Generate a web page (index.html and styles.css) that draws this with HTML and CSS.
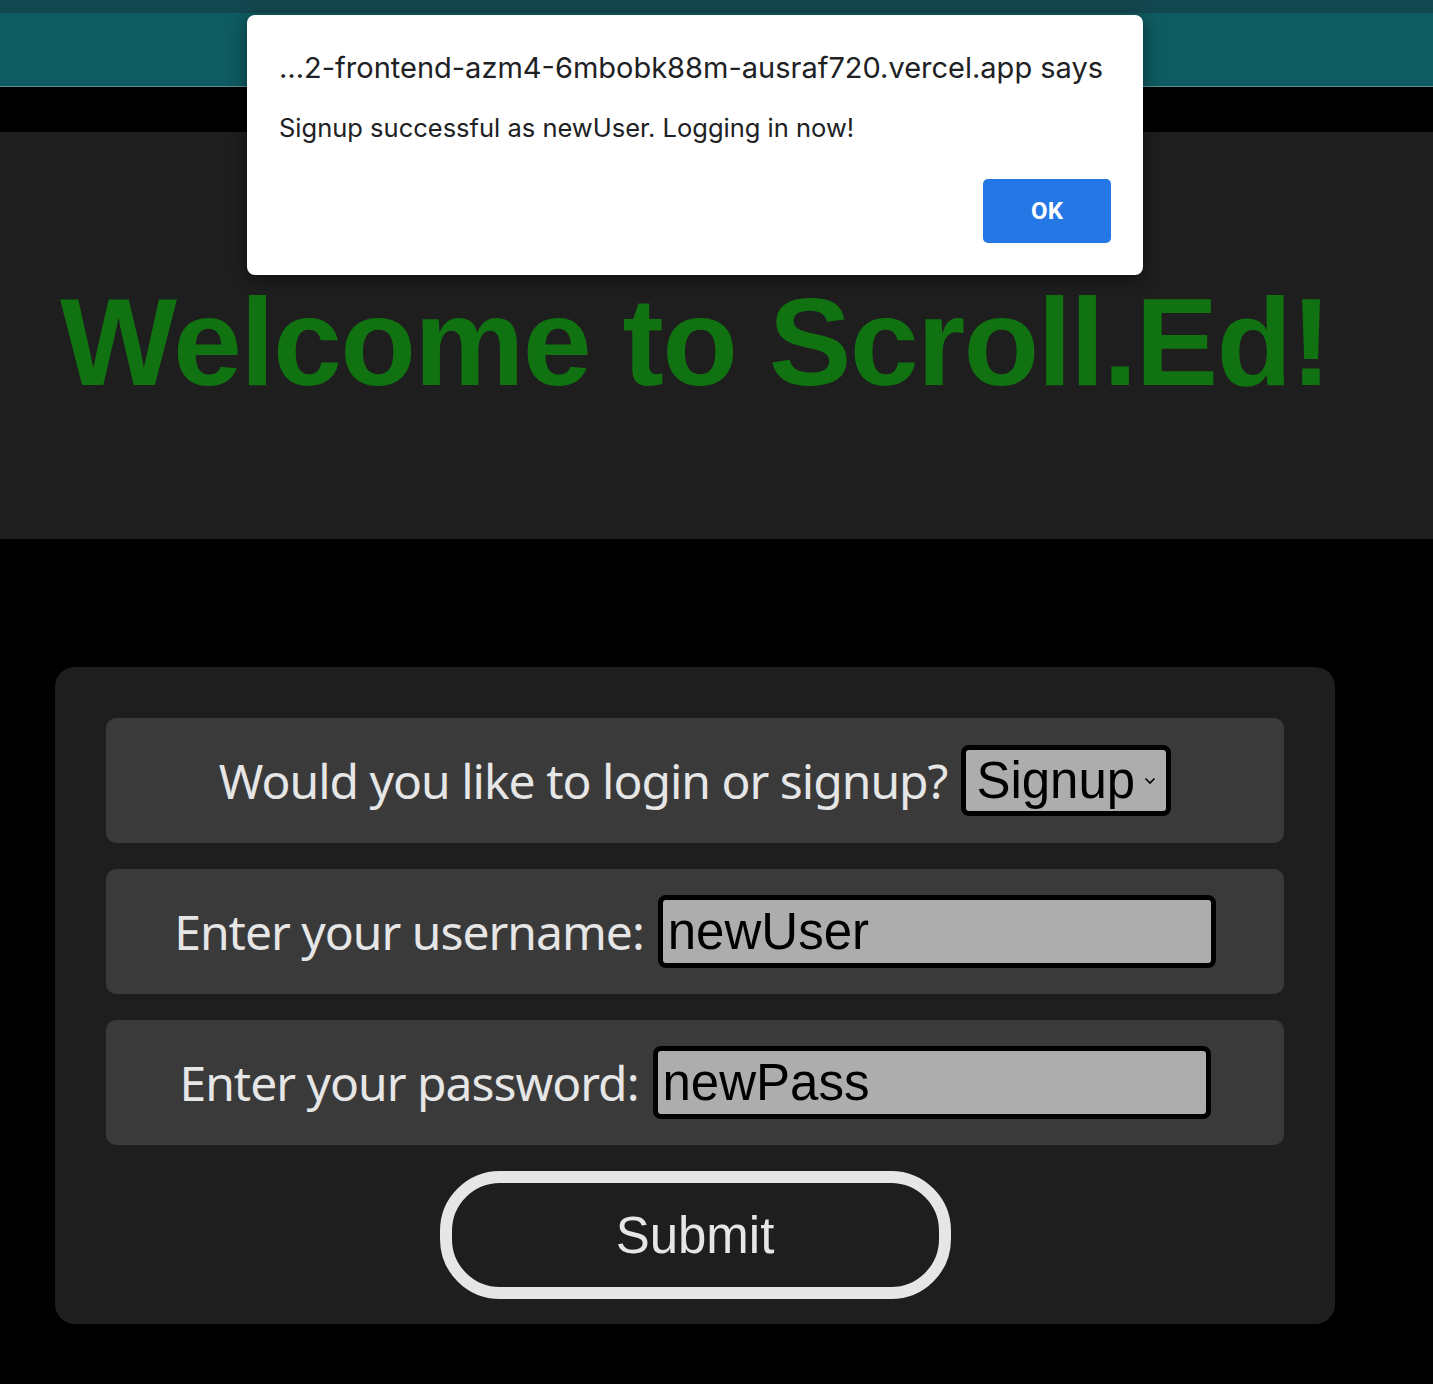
FILE: index.html
```html
<!DOCTYPE html>
<html lang="en">
<head>
<meta charset="utf-8">
<title>Scroll.Ed</title>
<link rel="stylesheet" href="styles.css">
</head>
<body>
<div class="topbar"><div class="topbar-strip"></div><div class="topbar-main"></div></div>
<div class="gap-black"></div>
<header class="hero">
  <h1 class="hero-title">Welcome to Scroll.Ed!</h1>
</header>
<main class="main">
  <form class="card">
    <div class="row">
      <label class="label">Would you like to login or signup?</label>
      <div class="select">Signup<svg class="chev" width="12" height="8" viewBox="0 0 12 8"><path d="M1.5 1.5 L6 6 L10.5 1.5" fill="none" stroke="#000" stroke-width="1.6"/></svg></div>
    </div>
    <div class="row">
      <label class="label">Enter your username:</label>
      <div class="input">newUser</div>
    </div>
    <div class="row">
      <label class="label">Enter your password:</label>
      <div class="input">newPass</div>
    </div>
    <div class="submit-wrap"><button class="submit" type="button">Submit</button></div>
  </form>
</main>
<div class="dialog">
  <div class="dialog-title">…2-frontend-azm4-6mbobk88m-ausraf720.vercel.app says</div>
  <div class="dialog-msg">Signup successful as newUser. Logging in now!</div>
  <div class="dialog-actions"><button class="ok" type="button">OK</button></div>
</div>
</body>
</html>
```
FILE: styles.css
```css
html, body { margin: 0; padding: 0; background: #000; }
body { width: 1433px; height: 1384px; overflow: hidden; position: relative; }

.topbar-strip { height: 13px; background: #13474f; }
.topbar-main { height: 73px; background: #0e5b61; border-bottom: 1px solid #5a8f93; }
.gap-black { height: 45px; background: #000; }

.hero {
  height: 407px;
  background: #1e1e1e;
  box-sizing: border-box;
  padding-left: 60px;
  padding-top: 148px;
}
.hero-title {
  margin: 0;
  font-family: "Liberation Sans", Arial, sans-serif;
  font-weight: 700;
  font-size: 124px;
  line-height: 1;
  color: #107210;
  letter-spacing: -1.75px;
}

.main { padding: 128px 0 0 55px; }
.card {
  width: 1280px;
  box-sizing: border-box;
  background: #1e1e1e;
  border-radius: 20px;
  padding: 51px 51px 25px;
  display: flex;
  flex-direction: column;
  gap: 26px;
}
.row {
  height: 125px;
  background: #3a3a3a;
  border-radius: 10px;
  display: flex;
  align-items: center;
  justify-content: center;
  gap: 14px;
}
.label {
  font-family: "Noto Sans", sans-serif;
  font-size: 48px;
  letter-spacing: -1px;
  color: #e6e6e6;
}
.select {
  box-sizing: border-box;
  height: 71px;
  border: 5px solid #000;
  border-radius: 8px;
  background: #adadad;
  font-family: "Liberation Sans", Arial, sans-serif;
  font-size: 51px;
  color: #000;
  display: flex;
  align-items: center;
  padding: 0 10px 0 10px;
  gap: 9px;
}
.input {
  box-sizing: border-box;
  width: 558px;
  height: 73px;
  border: 5px solid #000;
  border-radius: 8px;
  background: #adadad;
  font-family: "Liberation Sans", Arial, sans-serif;
  font-size: 51px;
  color: #000;
  display: flex;
  align-items: center;
  padding-left: 5px;
}
.submit-wrap { display: flex; justify-content: center; }
.submit {
  width: 511px;
  height: 128px;
  box-sizing: border-box;
  border: 12px solid #e6e6e6;
  border-radius: 60px;
  background: #1e1e1e;
  color: #e6e6e6;
  font-family: "Liberation Sans", Arial, sans-serif;
  font-size: 51px;
  padding: 0;
}

.dialog {
  position: absolute;
  left: 247px;
  top: 15px;
  width: 896px;
  height: 260px;
  box-sizing: border-box;
  background: #fff;
  border-radius: 8px;
  box-shadow: 0 4px 18px rgba(0,0,0,0.45);
  padding: 36px 32px 32px 32px;
  font-family: Inter, Roboto, sans-serif;
  color: #202124;
}
.dialog-title { font-size: 29px; line-height: 34px; letter-spacing: 0; }
.dialog-msg { font-size: 25.5px; line-height: 30px; margin-top: 28px; letter-spacing: 0; }
.dialog-actions { display: flex; justify-content: flex-end; margin-top: 36px; }
.ok {
  width: 128px;
  height: 64px;
  border: none;
  border-radius: 5px;
  background: #2477e4;
  color: #fff;
  font-family: Roboto, "Noto Sans", sans-serif;
  font-weight: 700;
  font-size: 24px;
}
```
